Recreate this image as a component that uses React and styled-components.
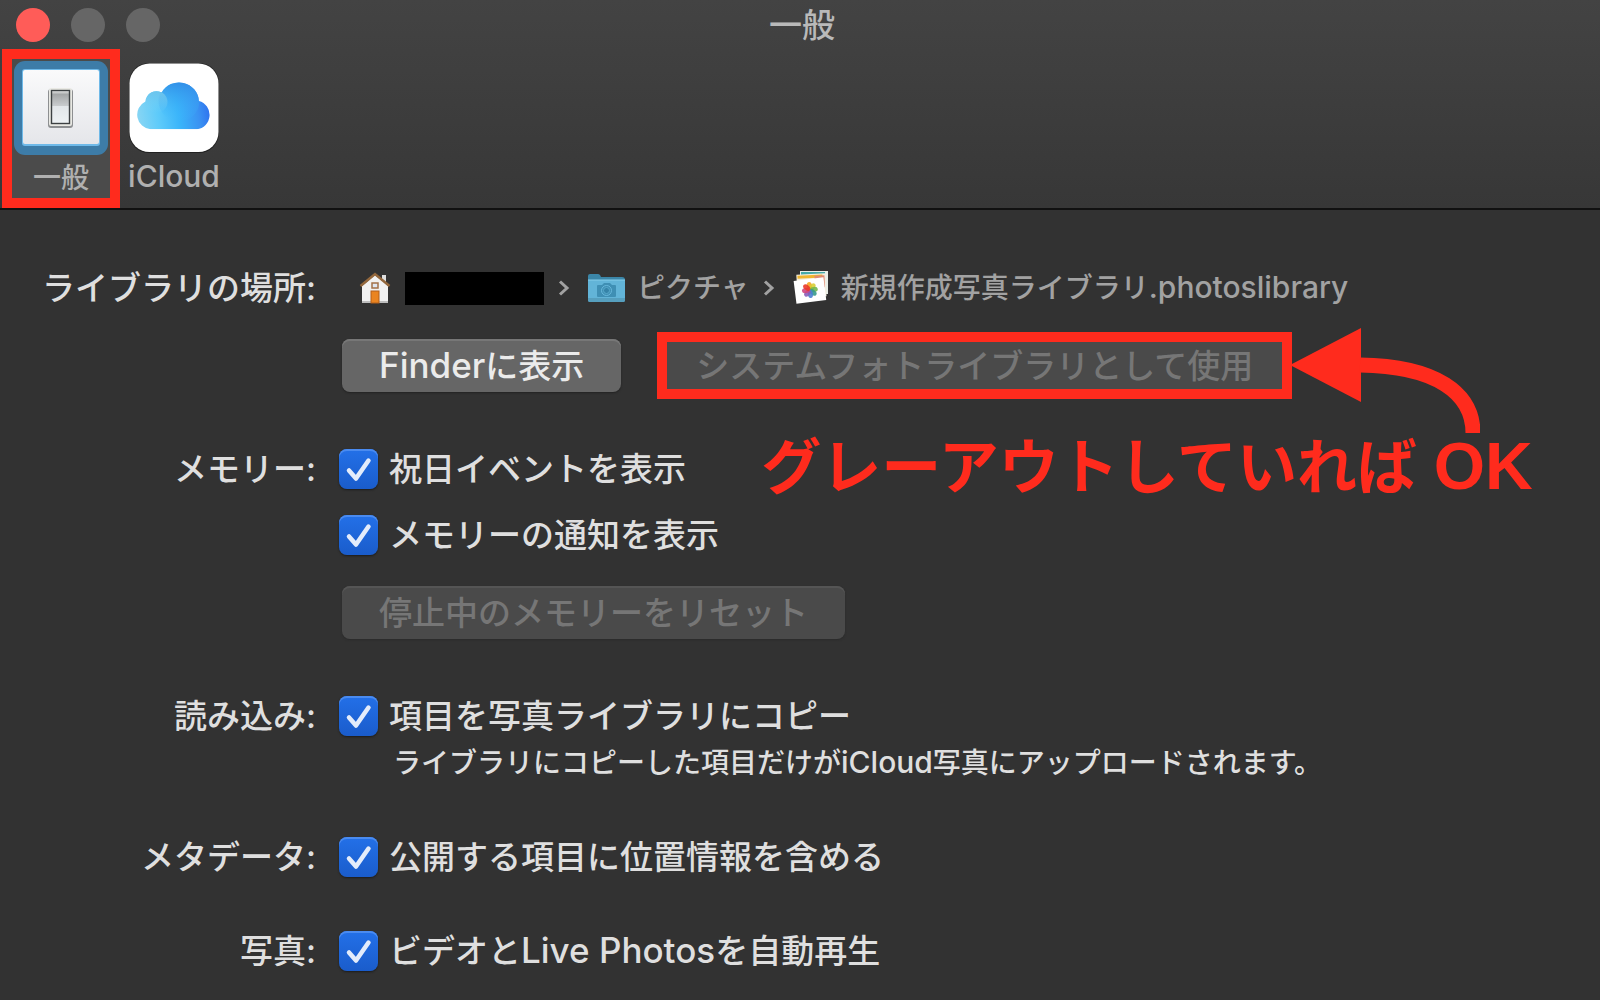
import { useId, useState } from "react";
import styled, { createGlobalStyle } from "styled-components";

const RED = "#ff2b1d";

const GlobalStyle = createGlobalStyle`
  * {
    box-sizing: border-box;
  }
  body {
    margin: 0;
    background: #323232;
    color: #dfdfdf;
    font-family: Inter, "Noto Sans CJK JP", sans-serif;
    font-size: 33px;
    font-weight: 500;
    line-height: 40px;
  }
  button,
  input {
    font: inherit;
  }
`;

const Window = styled.div`
  min-height: 100vh;
  overflow: hidden;
`;

const Header = styled.header`
  background: linear-gradient(#434343, #373737);
  border-bottom: 2px solid #111;
`;

const TitleBar = styled.div`
  display: grid;
  grid-template-columns: 1fr auto 1fr;
  align-items: center;
  height: 49px;
  padding: 0 12px 0 16px;
  color: #b9b9b9;

  h1 {
    margin: 0;
    font-size: 33px;
    font-weight: 500;
  }
`;

const TrafficLights = styled.div`
  display: flex;
  gap: 21px;
`;

const Light = styled.button`
  width: 34px;
  height: 34px;
  padding: 0;
  border: 0;
  border-radius: 50%;
  background: ${(props) => props.$color};
`;

const Toolbar = styled.nav`
  display: flex;
  gap: 4px;
  padding: 0 2px;
`;

const ToolbarItem = styled.button`
  display: flex;
  flex-direction: column;
  align-items: center;
  justify-content: space-between;
  width: ${(props) => (props.$selected ? 118 : 100)}px;
  height: 159px;
  padding: ${(props) => (props.$selected ? "2px 0 0" : "14px 0 11px")};
  border: ${(props) => (props.$selected ? `10px solid ${RED}` : "0")};
  background: ${(props) => (props.$selected ? "#4b4b4b" : "none")};
  color: #b0b0b0;
  font-size: 28px;
  line-height: 40px;

  svg {
    display: block;
    flex: none;
  }
`;

// Latin runs are set a little larger than the kana around them
const Latin = styled.span`
  font-size: ${(props) => (props.$small ? 30 : 35)}px;
  line-height: 1;
`;

const Settings = styled.main`
  display: flex;
  flex-direction: column;
  padding: 58px 0 30px;
`;

const Row = styled.section`
  display: grid;
  grid-template-columns: 316px 1fr;
  column-gap: 23px;
  margin-bottom: ${(props) => props.$space}px;
`;

const RowTitle = styled.div`
  text-align: right;
  white-space: nowrap;
`;

const RowBody = styled.div`
  display: flex;
  flex-direction: column;
  align-items: flex-start;
  gap: 26px;
`;

const Path = styled.div`
  display: flex;
  align-items: center;
  height: 40px;
  padding-left: 20px;
  color: #a2a2a2;
  font-size: 28px;
  white-space: nowrap;

  svg {
    flex: none;
  }
`;

const Redacted = styled.span`
  width: 139px;
  height: 33px;
  margin-left: 14px;
  background: #000;
`;

const PathText = styled.span`
  margin-left: 12px;
`;

const ButtonRow = styled.div`
  display: flex;
  gap: 38px;
  margin: 5px 0 0 3px;
`;

const PushButton = styled.button`
  height: 53px;
  padding: 0 37px;
  border: 0;
  border-radius: 8px;
  background: #666;
  box-shadow: inset 0 2px 0 #777, 0 1px 2px #222;
  color: #ebebeb;
  line-height: 50px;
  white-space: nowrap;

  &:disabled {
    background: #4a4a4a;
    box-shadow: inset 0 2px 0 #555, 0 1px 2px #2a2a2a;
    color: #767676;
  }
`;

const Highlighted = styled.div`
  position: relative;
`;

const Frame = styled.div`
  position: absolute;
  inset: -7px -2px;
  border: 10px solid ${RED};
  pointer-events: none;
`;

const Arrow = styled.svg`
  position: absolute;
  left: 100%;
  top: -12px;
`;

const Callout = styled.strong`
  position: absolute;
  left: 102px;
  top: 92px;
  color: ${RED};
  font-family: "Liberation Sans", "Noto Sans CJK JP", sans-serif;
  font-size: 60px;
  line-height: 70px;
  white-space: nowrap;

  span {
    font-size: 66px;
  }
`;

const CheckLabel = styled.label`
  display: flex;
  align-items: center;
  gap: 11px;
  height: 40px;
  white-space: nowrap;
`;

const CheckBox = styled.span`
  display: grid;

  input,
  svg {
    grid-area: 1 / 1;
    width: 39px;
    height: 40px;
    margin: 0;
  }
  input {
    appearance: none;
    border-radius: 8px;
    background: #4a4a4a;
    box-shadow: inset 0 2px 0 #555, 0 1px 2px #1c1c1c;
  }
  input:checked {
    background: linear-gradient(#2370e8, #1a5ccb);
    box-shadow: inset 0 2px 0 #4a8bf0, 0 1px 2px #1c1c1c;
  }
  svg {
    pointer-events: none;
  }
`;

const Hint = styled.p`
  height: 40px;
  margin: -19px 0 0 54px;
  font-size: 28px;
  white-space: nowrap;
`;

const SwitchIcon = () => (
  <svg width='94' height='94' viewBox='0 0 94 94'>
    <defs>
      <linearGradient id='plate' x2='0' y2='1'>
        <stop stopColor='#fafafb' />
        <stop offset='1' stopColor='#e5e6ea' />
      </linearGradient>
      <linearGradient id='rocker' x2='0' y2='1'>
        <stop stopColor='#ececec' />
        <stop offset='0.12' stopColor='#a5a7a8' />
        <stop offset='0.46' stopColor='#c8cbcd' />
        <stop offset='0.47' stopColor='#e2e6e9' />
        <stop offset='1' stopColor='#eef2f4' />
      </linearGradient>
    </defs>
    <rect width='94' height='94' rx='11' fill='#3d7ca8' />
    <rect x='8' y='8' width='78' height='77' rx='3' fill='#6fb9e8' />
    <rect x='9' y='9' width='76' height='74' rx='2' fill='url(#plate)' />
    <rect x='34' y='28' width='25' height='39' rx='3' fill='#8d8f91' />
    <rect x='35' y='27' width='23' height='38' rx='2' fill='#e9e9e4' />
    <rect
      x='37.5'
      y='29.5'
      width='18'
      height='33'
      fill='url(#rocker)'
      stroke='#3d4143'
      strokeWidth='1.4'
    />
  </svg>
);

const CloudIcon = () => (
  <svg width='90' height='90' viewBox='0 0 90 90'>
    <defs>
      <linearGradient id='cloud' x1='0' x2='1' y1='0.6' y2='0.5'>
        <stop stopColor='#8bd6f3' />
        <stop offset='0.28' stopColor='#5ecbfa' />
        <stop offset='0.55' stopColor='#3ab4fa' />
        <stop offset='0.8' stopColor='#3a92f2' />
        <stop offset='1' stopColor='#2b69ee' />
      </linearGradient>
      <linearGradient id='dome' x2='0' y2='1'>
        <stop stopColor='#3089e4' stopOpacity='0.9' />
        <stop offset='1' stopColor='#3fc0ff' stopOpacity='0' />
      </linearGradient>
      <linearGradient id='puff' x2='0' y2='1'>
        <stop stopColor='#6cc4ec' />
        <stop offset='1' stopColor='#7dd3f6' stopOpacity='0' />
      </linearGradient>
      <clipPath id='cloudShape'>
        <path d='M23 66a14 14 0 0 1 -5 -26.500A10.500 10.500 0 0 1 33.500 31A19 19 0 0 1 69 39A13.800 13.800 0 0 1 67 66Z' />
      </clipPath>
    </defs>
    <rect width='90' height='90' rx='20' fill='#222' />
    <rect x='0.5' y='0.5' width='89' height='88.500' rx='20' fill='#fff' />
    <g transform='translate(-2.500 -3) scale(1.050)'>
      <g clipPath='url(#cloudShape)'>
        <rect x='8' y='18' width='74' height='50' fill='url(#cloud)' />
        <circle cx='50' cy='39' r='19.500' fill='url(#dome)' />
        <circle cx='28.500' cy='40' r='10.500' fill='url(#puff)' />
      </g>
    </g>
  </svg>
);

const HomeIcon = () => (
  <svg width='32' height='32' viewBox='0 0 32 32'>
    <path d='M23 3h4v10h-4z' fill='#dedede' />
    <path d='M3 14L16 3l13 11v17H3z' fill='#f1f1f1' />
    <path d='M3 29h26v2H3z' fill='#bdbdbd' />
    <path
      d='M1.500 14L16 2l14.500 12'
      fill='none'
      stroke='#93673c'
      strokeWidth='2.500'
    />
    <rect
      x='13'
      y='11'
      width='6'
      height='5'
      fill='#dfe7f2'
      stroke='#a3714a'
      strokeWidth='1.500'
    />
    <rect x='12' y='19' width='8' height='12' fill='#ea8420' stroke='#b35f18' />
  </svg>
);

const FolderIcon = () => (
  <svg width='37' height='30' viewBox='0 0 37 30'>
    <path d='M0 3q0-2 2-2h8q1 0 2 1l1 2h21q3 0 3 3v6H0z' fill='#3b86a8' />
    <path d='M0 7h37v20q0 2-2 2H2q-2 0-2-2z' fill='#62b4d8' />
    <path d='M0 7h37' stroke='#86cdea' />
    <path d='M0 25h37v2q0 2-2 2H2q-2 0-2-2z' fill='#569fbe' />
    <path
      d='M10 12h4l2-2h6l2 2h3q1 0 1 1v10q0 1-1 1H10q-1 0-1-1V13q0-1 1-1z'
      fill='#3f8fb4'
    />
    <circle cx='18.500' cy='17.500' r='5' fill='none' stroke='#68b8dc' />
    <circle cx='18.500' cy='17.500' r='3' fill='#3583a8' stroke='#58a9cc' />
  </svg>
);

const PETALS = [
  "#f5a623",
  "#d8ce35",
  "#72b84b",
  "#379a8b",
  "#4b7fd0",
  "#8a5db8",
  "#d2467f",
  "#ea3a28",
];

const PhotosIcon = () => (
  <svg width='36' height='34' viewBox='0 0 36 34'>
    <rect x='7' y='0' width='28' height='23' fill='#e9efe9' />
    <path d='M8 1h24v3H8z' fill='#46a9a8' />
    <g transform='rotate(-3 18 16)'>
      <rect x='4' y='3' width='29' height='23' fill='#f4efe0' />
      <path d='M5 4h25v3H5z' fill='#efb52f' />
      <path d='M22 5h10v12H22z' fill='#dd8a72' />
    </g>
    <g transform='rotate(-7 17 20)'>
      <rect x='2' y='8' width='30' height='23' fill='#fff' />
      {PETALS.map((color, i) => (
        <ellipse
          key={color}
          cx='17'
          cy='15'
          rx='2.600'
          ry='4'
          fill={color}
          fillOpacity='0.9'
          transform={`rotate(${i * 45} 17 19)`}
        />
      ))}
    </g>
  </svg>
);

const ChevronSvg = styled.svg`
  margin: 0 ${(props) => props.$after}px 0 ${(props) => props.$before}px;
`;

const Chevron = ({ before, after }) => (
  <ChevronSvg
    $before={before}
    $after={after}
    width='12'
    height='18'
    viewBox='0 0 12 18'
    fill='none'
    stroke='#a2a2a2'
    strokeWidth='3'
  >
    <path d='M2 2.500L9 9l-7 6.500' />
  </ChevronSvg>
);

const Option = ({ children }) => {
  const [checked, setChecked] = useState(true);
  return (
    <CheckLabel>
      <CheckBox>
        <input
          type='checkbox'
          checked={checked}
          onChange={(e) => setChecked(e.target.checked)}
        />
        {checked ? (
          <svg
            viewBox='0 0 39 40'
            fill='none'
            stroke='#e3ecfb'
            strokeWidth='4.500'
            strokeLinecap='round'
            strokeLinejoin='round'
          >
            <path d='M10 21.500l7 8L29.500 11.500' />
          </svg>
        ) : null}
      </CheckBox>
      <span>{children}</span>
    </CheckLabel>
  );
};

const Setting = ({ title, space, children }) => {
  const id = useId();
  return (
    <Row role='group' aria-labelledby={id} $space={space}>
      <RowTitle id={id}>{title}:</RowTitle>
      <RowBody>{children}</RowBody>
    </Row>
  );
};

const App = () => (
  <Window>
    <GlobalStyle />
    <Header>
      <TitleBar>
        <TrafficLights>
          <Light $color='#ff5c58' aria-label='閉じる' />
          <Light $color='#666' aria-label='しまう' />
          <Light $color='#666' aria-label='拡大' />
        </TrafficLights>
        <h1>一般</h1>
      </TitleBar>
      <Toolbar>
        <ToolbarItem $selected>
          <SwitchIcon />
          一般
        </ToolbarItem>
        <ToolbarItem>
          <CloudIcon />
          <span>
            <Latin $small>iCloud</Latin>
          </span>
        </ToolbarItem>
      </Toolbar>
    </Header>

    <Settings>
      <Setting title='ライブラリの場所' space={57}>
        <Path>
          <HomeIcon />
          <Redacted />
          <Chevron before={14} after={18} />
          <FolderIcon />
          <PathText>ピクチャ</PathText>
          <Chevron before={14} after={18} />
          <PhotosIcon />
          <PathText>
            新規作成写真ライブラリ<Latin $small>.photoslibrary</Latin>
          </PathText>
        </Path>
        <ButtonRow>
          <PushButton>
            <Latin>Finder</Latin>に表示
          </PushButton>
          <Highlighted>
            <PushButton disabled>システムフォトライブラリとして使用</PushButton>
            <Frame />
            <Arrow width='190' height='110' viewBox='0 0 190 110'>
              <path d='M0 38L71 1v74z' fill={RED} />
              <path
                d='M70 38C146 39 183 66 183 106'
                fill='none'
                stroke={RED}
                strokeWidth='15'
              />
            </Arrow>
            <Callout>
              グレーアウトしていれば <span>OK</span>
            </Callout>
          </Highlighted>
        </ButtonRow>
      </Setting>

      <Setting title='メモリー' space={57}>
        <Option>祝日イベントを表示</Option>
        <Option>メモリーの通知を表示</Option>
        <ButtonRow>
          <PushButton disabled>停止中のメモリーをリセット</PushButton>
        </ButtonRow>
      </Setting>

      <Setting title='読み込み' space={54}>
        <Option>項目を写真ライブラリにコピー</Option>
        <Hint>
          ライブラリにコピーした項目だけが<Latin $small>iCloud</Latin>
          写真にアップロードされます。
        </Hint>
      </Setting>

      <Setting title='メタデータ' space={54}>
        <Option>公開する項目に位置情報を含める</Option>
      </Setting>

      <Setting title='写真' space={0}>
        <Option>
          ビデオと<Latin>Live Photos</Latin>を自動再生
        </Option>
      </Setting>
    </Settings>
  </Window>
);

export default App;
